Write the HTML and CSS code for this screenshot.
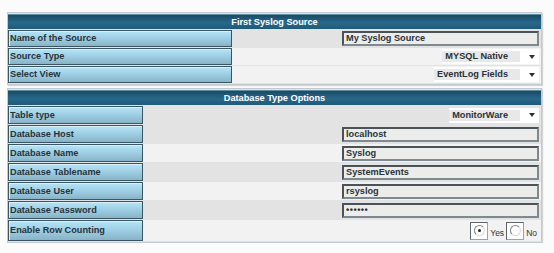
FILE: index.html
```html
<!DOCTYPE html>
<html>
<head>
<meta charset="utf-8">
<link rel="stylesheet" href="styles.css">
</head>
<body>
<div class="page">
  <table class="form t1">
    <tr><th colspan="2" class="head">First Syslog Source</th></tr>
    <tr class="dark">
      <td class="lbl">Name of the Source</td>
      <td class="val"><div class="cell"><div class="field">My Syslog Source</div></div></td>
    </tr>
    <tr class="light">
      <td class="lbl">Source Type</td>
      <td class="val"><div class="cell"><div class="sel"><span class="opt">MYSQL Native</span><span class="arrow"></span></div></div></td>
    </tr>
    <tr class="light">
      <td class="lbl">Select View</td>
      <td class="val"><div class="cell"><div class="sel"><span class="opt">EventLog Fields</span><span class="arrow"></span></div></div></td>
    </tr>
  </table>
  <table class="form t2">
    <tr><th colspan="2" class="head">Database Type Options</th></tr>
    <tr class="dark">
      <td class="lbl">Table type</td>
      <td class="val"><div class="cell"><div class="sel"><span class="opt">MonitorWare</span><span class="arrow"></span></div></div></td>
    </tr>
    <tr class="dark">
      <td class="lbl">Database Host</td>
      <td class="val"><div class="cell"><div class="field">localhost</div></div></td>
    </tr>
    <tr class="light">
      <td class="lbl">Database Name</td>
      <td class="val"><div class="cell"><div class="field">Syslog</div></div></td>
    </tr>
    <tr class="dark">
      <td class="lbl">Database Tablename</td>
      <td class="val"><div class="cell"><div class="field">SystemEvents</div></div></td>
    </tr>
    <tr class="light">
      <td class="lbl">Database User</td>
      <td class="val"><div class="cell"><div class="field">rsyslog</div></div></td>
    </tr>
    <tr class="dark">
      <td class="lbl">Database Password</td>
      <td class="val"><div class="cell"><div class="field pw">••••••</div></div></td>
    </tr>
    <tr class="light tall">
      <td class="lbl">Enable Row Counting</td>
      <td class="val">
        <div class="cell">
          <span class="rbox"><span class="radio on"></span></span><span class="rtext">Yes</span>
          <span class="rbox"><span class="radio"></span></span><span class="rtext">No</span>
        </div>
      </td>
    </tr>
  </table>
</div>
</body>
</html>
```

FILE: styles.css
```css
html, body {
  margin: 0;
  padding: 0;
  background: #fbfbfb;
}
body {
  font-family: "Liberation Sans", Arial, sans-serif;
  font-weight: bold;
  font-size: 9.2px;
  line-height: 11px;
  color: #2a3338;
}
.page {
  padding: 12px 12px 0 7px;
  width: 535px;
}
.form {
  width: 535px;
  border-collapse: separate;
  border-spacing: 0 1px;
  border: 1px solid #c3cace;
  background: #dfe3e5;
  box-shadow: 1px 1px 1px #d4d4d4;
}
.t1 { margin-bottom: 3px; }
.form td, .form th {
  padding: 0;
}
.head {
  height: 14px;
  color: #fff;
  text-align: center;
  background: linear-gradient(#1b4a63, #27688a 55%, #205a78);
  border-top: 1px solid #5e8ca3;
}
.lbl {
  box-sizing: border-box;
  height: 17px;
  padding: 0 0 0 1px !important;
  border: 1px solid #3a5563;
  background: linear-gradient(#b7e4f6, #9fd0e6 45%, #88b3c6);
  box-shadow: inset 1px 1px 0 #d6f1fb;
  color: #27343a;
  white-space: nowrap;
}
.t1 .lbl { width: 224px; }
.t2 .lbl { width: 135px; height: 18px; }
.t2 .tall .lbl { height: 21px; }
.val {
  box-sizing: border-box;
  height: 17px;
}
.t2 .val { height: 18px; }
.t2 .tall .val { height: 21px; }
.cell {
  display: flex;
  justify-content: flex-end;
  align-items: center;
  padding-right: 2px;
}
.dark .val { background: #e3e3e3; }
.light .val { background: #f2f2f2; }
.field {
  box-sizing: border-box;
  width: 197px;
  height: 15px;
  line-height: 11px;
  padding-left: 2px;
  border: 2px solid #4a5458;
  border-right-color: #7d8b91;
  border-bottom-color: #7d8b91;
  background: #ececea;
  color: #2a3338;
}
.pw { letter-spacing: 0.5px; }
.sel {
  display: flex;
  align-items: center;
  height: 15px;
  background: #fff;
}
.opt {
  background: #e8e8e8;
  padding: 0 12px 0 3px;
  height: 11px;
  line-height: 11px;
  color: #2a3338;
}
.arrow {
  width: 0;
  height: 0;
  margin: 0 4px 0 9px;
  border-left: 3.5px solid transparent;
  border-right: 3.5px solid transparent;
  border-top: 4px solid #2a3338;
}
.rbox {
  box-sizing: border-box;
  width: 18px;
  height: 18px;
  border: 1px solid #5d676b;
  border-right-color: #9aa3a6;
  border-bottom-color: #9aa3a6;
  background: #fff;
  display: flex;
  align-items: center;
  justify-content: center;
}
.radio {
  box-sizing: border-box;
  width: 11px;
  height: 11px;
  border-radius: 50%;
  border: 1px solid #7a8285;
  border-right-color: #d9dcdd;
  border-bottom-color: #d9dcdd;
  background: #fff;
  position: relative;
}
.radio.on::after {
  content: "";
  position: absolute;
  left: 3px;
  top: 3px;
  width: 3px;
  height: 3px;
  border-radius: 50%;
  background: #222;
}
.rtext {
  align-self: flex-end;
  margin: 0 2px 1px 2px;
  font-size: 8.5px;
  font-weight: normal;
  color: #333;
}
```
